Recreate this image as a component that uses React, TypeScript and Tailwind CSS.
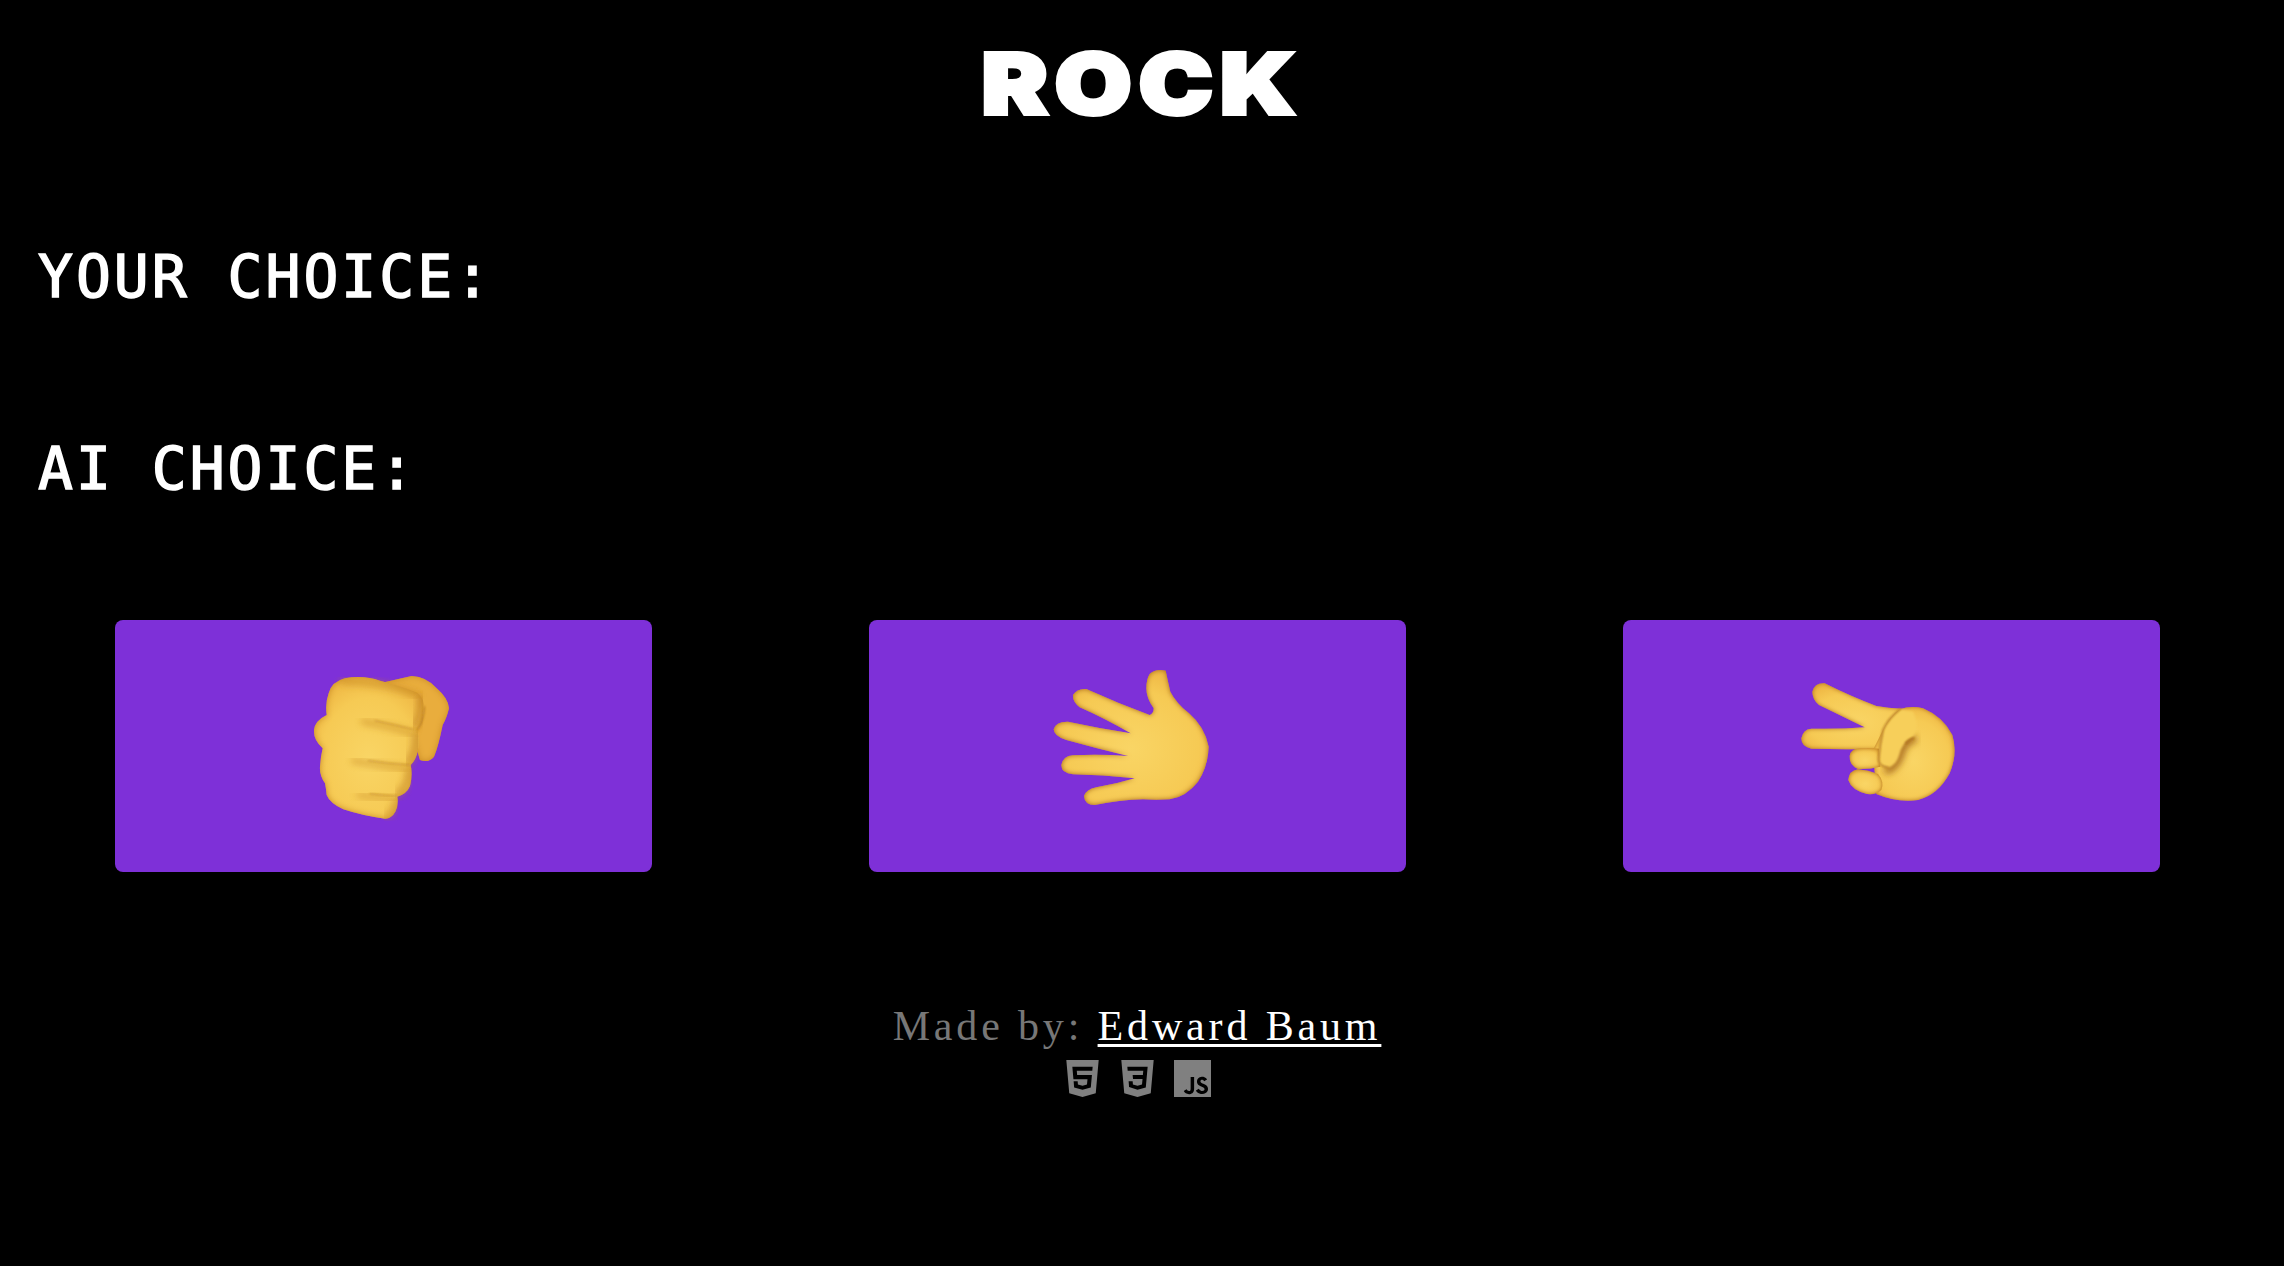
import React from "react";

const Defs = ({ id, blur = 12, dark = "#b9741c" }: { id: string; blur?: number; dark?: string }) => (
  <defs>
    <radialGradient id={id + "g"} cx="50%" cy="58%" r="62%">
      <stop offset="0%" stopColor="#f9d565" />
      <stop offset="70%" stopColor="#f6ca54" />
      <stop offset="100%" stopColor="#eeb643" />
    </radialGradient>
    <filter id={id} x="-30%" y="-30%" width="160%" height="160%" colorInterpolationFilters="sRGB">
      <feComponentTransfer in="SourceAlpha" result="inv">
        <feFuncA type="table" tableValues="1 0" />
      </feComponentTransfer>
      <feGaussianBlur in="inv" stdDeviation={blur} result="b" />
      <feFlood floodColor={dark} />
      <feComposite in2="b" operator="in" />
      <feComposite in2="SourceAlpha" operator="in" result="s" />
      <feMerge result="m">
        <feMergeNode in="SourceGraphic" />
        <feMergeNode in="s" />
      </feMerge>
      <feGaussianBlur in="m" stdDeviation="1.6" />
    </filter>
    <filter id={id + "b1"} x="-30%" y="-30%" width="160%" height="160%">
      <feGaussianBlur stdDeviation="2.4" />
    </filter>
    <filter id={id + "b2"} x="-30%" y="-30%" width="160%" height="160%">
      <feGaussianBlur stdDeviation="11" />
    </filter>
  </defs>
);

const Fist = () => (
  <svg viewBox="9 3 600 570" className="w-[200px] h-[190px]">
    <Defs id="f" blur={10} dark="#c88a24" />
    <path filter="url(#f)" fill="#e9ad3d" d="M300 100 Q350 88 395 78 Q440 80 470 115 Q505 145 507 175 Q500 205 488 225 Q475 290 462 320 Q445 340 420 330 L380 200 Z" />
    <path
      filter="url(#f)"
      fill="url(#fg)"
      d="M146 130 Q155 95 195 85 Q250 75 300 92 Q370 110 412 128 Q438 150 433 190 Q430 222 412 240 Q420 270 414 300 Q408 330 392 345 Q398 375 390 408 Q380 432 352 440 Q356 465 346 485 Q335 505 315 506 Q250 498 190 478 Q150 460 140 435 Q138 415 135 400 Q118 375 120 350 Q122 320 128 295 Q100 270 102 240 Q105 212 140 195 Q135 160 146 130 Z"
    />
    <g fill="none" strokeLinecap="round">
      <path filter="url(#fb2)" stroke="#c88a24" strokeWidth="16" opacity="0.7" d="M190 95 Q300 95 410 135" />
      <path filter="url(#fb2)" stroke="#c07f20" strokeWidth="20" opacity="0.75" d="M422 145 Q425 190 405 225" />
      <path filter="url(#fb2)" stroke="#c07f20" strokeWidth="18" opacity="0.7" d="M405 255 Q410 300 385 335" />
      <path filter="url(#fb2)" stroke="#c07f20" strokeWidth="16" opacity="0.7" d="M385 360 Q388 400 355 430" />
      <path filter="url(#fb2)" stroke="#c07f20" strokeWidth="14" opacity="0.6" d="M345 455 Q345 480 320 498" />
      <path filter="url(#fb2)" stroke="#c88a24" strokeWidth="16" opacity="0.6" d="M250 215 Q340 232 395 250" />
      <path filter="url(#fb2)" stroke="#c88a24" strokeWidth="15" opacity="0.6" d="M220 332 Q320 350 380 356" />
      <path filter="url(#fb2)" stroke="#c88a24" strokeWidth="13" opacity="0.6" d="M235 435 Q300 445 345 448" />
      <path filter="url(#fb1)" stroke="#b0701c" strokeWidth="2.5" opacity="0.8" d="M285 212 Q340 224 400 238" />
      <path filter="url(#fb1)" stroke="#b0701c" strokeWidth="2.5" opacity="0.8" d="M265 332 Q320 341 388 345" />
      <path filter="url(#fb1)" stroke="#b0701c" strokeWidth="2.5" opacity="0.8" d="M270 431 Q310 437 350 438" />
      <path filter="url(#fb1)" stroke="#a9691a" strokeWidth="3" opacity="0.85" d="M412 240 Q430 220 434 170" />
    </g>
  </svg>
);

const Hand = () => (
  <svg viewBox="22 3 600 570" className="w-[200px] h-[190px]">
    <Defs id="h" blur={8} dark="#a86a18" />
    <path
      filter="url(#h)"
      fill="url(#hg)"
      d="M360 72 Q378 55 408 62 Q415 95 422 125 Q440 160 478 190 Q525 230 537 290 Q535 350 505 395 Q470 440 420 448 Q380 450 340 448 Q270 450 195 465 Q165 465 163 438 Q170 418 200 412 Q260 402 315 385 Q220 375 130 373 Q95 370 95 345 Q100 318 130 316 Q210 312 295 318 Q200 295 110 270 Q72 258 72 238 Q78 214 115 215 Q210 235 303 250 Q225 205 150 172 Q128 155 130 135 Q142 115 170 117 Q265 160 360 195 Q372 190 372 175 Q350 145 350 115 Q350 88 360 72 Z"
    />
  </svg>
);

const Scissors = () => (
  <svg viewBox="34 3 600 570" className="w-[200px] h-[190px]">
    <Defs id="s" blur={7} dark="#b0701a" />
    <path filter="url(#s)" fill="url(#sg)" d="M98 125 Q105 98 135 100 Q215 140 290 168 Q325 175 365 176 L400 300 L300 298 Q200 298 95 296 Q65 290 65 265 Q70 238 95 236 Q175 238 255 232 Q180 195 118 165 Q98 148 98 125 Z" />
    <path filter="url(#s)" fill="url(#sg)" d="M360 178 Q395 165 430 175 Q490 200 518 255 Q535 310 510 370 Q475 435 415 450 Q350 458 290 432 L280 300 L310 240 Q330 200 360 178 Z" />
    <path filter="url(#s)" fill="url(#sg)" d="M210 318 Q212 298 240 295 Q270 292 298 296 L302 350 Q270 358 235 357 Q208 345 210 318 Z" />
    <path filter="url(#s)" fill="url(#sg)" d="M206 390 Q208 362 235 358 Q265 360 295 372 Q315 395 305 420 Q290 435 262 432 Q215 420 206 390 Z" />
    <path filter="url(#sb2)" fill="none" stroke="#a5671a" strokeWidth="22" strokeLinecap="round" d="M400 268 Q375 272 365 305 Q355 345 325 360" />
    <path filter="url(#sb1)" fill="#f7cf5a" d="M360 178 Q325 205 310 240 Q300 285 297 330 Q300 350 325 352 Q350 345 358 315 Q365 280 395 263 Q425 240 400 185 Z" />
    <path filter="url(#sb1)" fill="none" stroke="#a9691a" strokeWidth="4" strokeLinecap="round" d="M362 177 Q325 205 310 240 Q300 285 297 330 Q300 350 325 352" />
    <path filter="url(#sb1)" fill="none" stroke="#a9691a" strokeWidth="5" strokeLinecap="round" d="M378 280 Q390 266 402 265" />
  </svg>
);

const Html = () => (
  <svg viewBox="0 0 24 24" className="w-[37px] h-[37px] fill-[#808080]">
    <path d="M1.5 0h21l-1.91 21.563L11.977 24l-8.564-2.438L1.5 0zm7.031 9.75l-.232-2.718 10.059.003.23-2.622L5.412 4.41l.698 8.01h9.126l-.326 3.426-2.91.804-2.955-.81-.188-2.11H6.248l.33 4.171L12 19.351l5.379-1.443.744-8.157H8.531z" />
  </svg>
);
const Css = () => (
  <svg viewBox="0 0 24 24" className="w-[37px] h-[37px] fill-[#808080]">
    <path d="M1.5 0h21l-1.91 21.563L11.977 24l-8.565-2.438L1.5 0zm17.09 4.413L5.41 4.41l.213 2.622 10.125.002-.255 2.716h-6.64l.24 2.573h6.182l-.366 3.523-2.91.804-2.956-.81-.188-2.11h-2.61l.29 3.855L12 19.288l5.373-1.53L18.59 4.414z" />
  </svg>
);
const Js = () => (
  <svg viewBox="0 0 24 24" className="w-[37px] h-[37px] fill-[#808080]">
    <path d="M0 0h24v24H0V0zm22.034 18.276c-.175-1.095-.888-2.015-3.003-2.873-.736-.345-1.554-.585-1.797-1.14-.091-.33-.105-.51-.046-.705.15-.646.915-.84 1.515-.66.39.12.75.42.976.9 1.034-.676 1.034-.676 1.755-1.125-.27-.42-.404-.601-.586-.78-.63-.705-1.469-1.065-2.834-1.034l-.705.089c-.676.165-1.32.525-1.71 1.005-1.14 1.291-.811 3.541.569 4.471 1.365 1.02 3.361 1.244 3.616 2.205.24 1.17-.87 1.545-1.966 1.41-.811-.18-1.26-.586-1.755-1.336l-1.83 1.051c.21.48.45.689.81 1.109 1.74 1.756 6.09 1.666 6.871-1.004.029-.09.24-.705.074-1.65l.046.067zm-8.983-7.245h-2.248c0 1.938-.009 3.864-.009 5.805 0 1.232.063 2.363-.138 2.711-.33.689-1.18.601-1.566.48-.396-.196-.597-.466-.83-.855-.063-.105-.11-.196-.127-.196l-1.825 1.125c.305.63.75 1.172 1.324 1.517.855.51 2.004.675 3.207.405.783-.226 1.458-.691 1.811-1.411.51-.93.402-2.07.397-3.346.012-2.054 0-4.109 0-6.179l.004-.056z" />
  </svg>
);

const Choice = ({ children }: { children: React.ReactNode }) => (
  <h2 className="h-[192px] pl-[38px] pt-[70px] font-['DejaVu_Sans_Mono',monospace] text-[58px] tracking-[3px] leading-[80px] font-normal text-white [-webkit-text-stroke:1.5px_white]">
    {children}
  </h2>
);

const Btn = ({ children }: { children: React.ReactNode }) => (
  <button className="w-[537px] h-[252px] rounded-[8px] bg-[#7e30d8] flex items-center justify-center">
    {children}
  </button>
);

export default function App() {
  return (
    <div className="w-full min-h-screen bg-black text-white overflow-hidden">
      <h1 className="h-[167px] flex items-center justify-center font-['Inter',sans-serif] font-black text-[84px] leading-none tracking-[6px] text-white">
        <span className="inline-block scale-x-[1.18] [-webkit-text-stroke:4px_white]">ROCK</span>
      </h1>
      <Choice>YOUR CHOICE:</Choice>
      <Choice>AI CHOICE:</Choice>
      <div className="mt-[69px] pl-[6px] grid grid-cols-[754px_754px_754px] justify-items-center">
        <Btn><Fist /></Btn>
        <Btn><Hand /></Btn>
        <Btn><Scissors /></Btn>
      </div>
      <footer className="mt-[131px] pr-[10px] flex flex-col items-center font-['Liberation_Serif',serif] text-[42px] leading-[46px] tracking-[3.85px] text-[#777777]">
        <p>
          Made by: <a className="text-white underline decoration-[3px] underline-offset-[4px]" href="#">Edward Baum</a>
        </p>
        <div className="mt-[11px] flex items-center justify-center gap-[18px]">
          <Html />
          <Css />
          <Js />
        </div>
      </footer>
    </div>
  );
}
